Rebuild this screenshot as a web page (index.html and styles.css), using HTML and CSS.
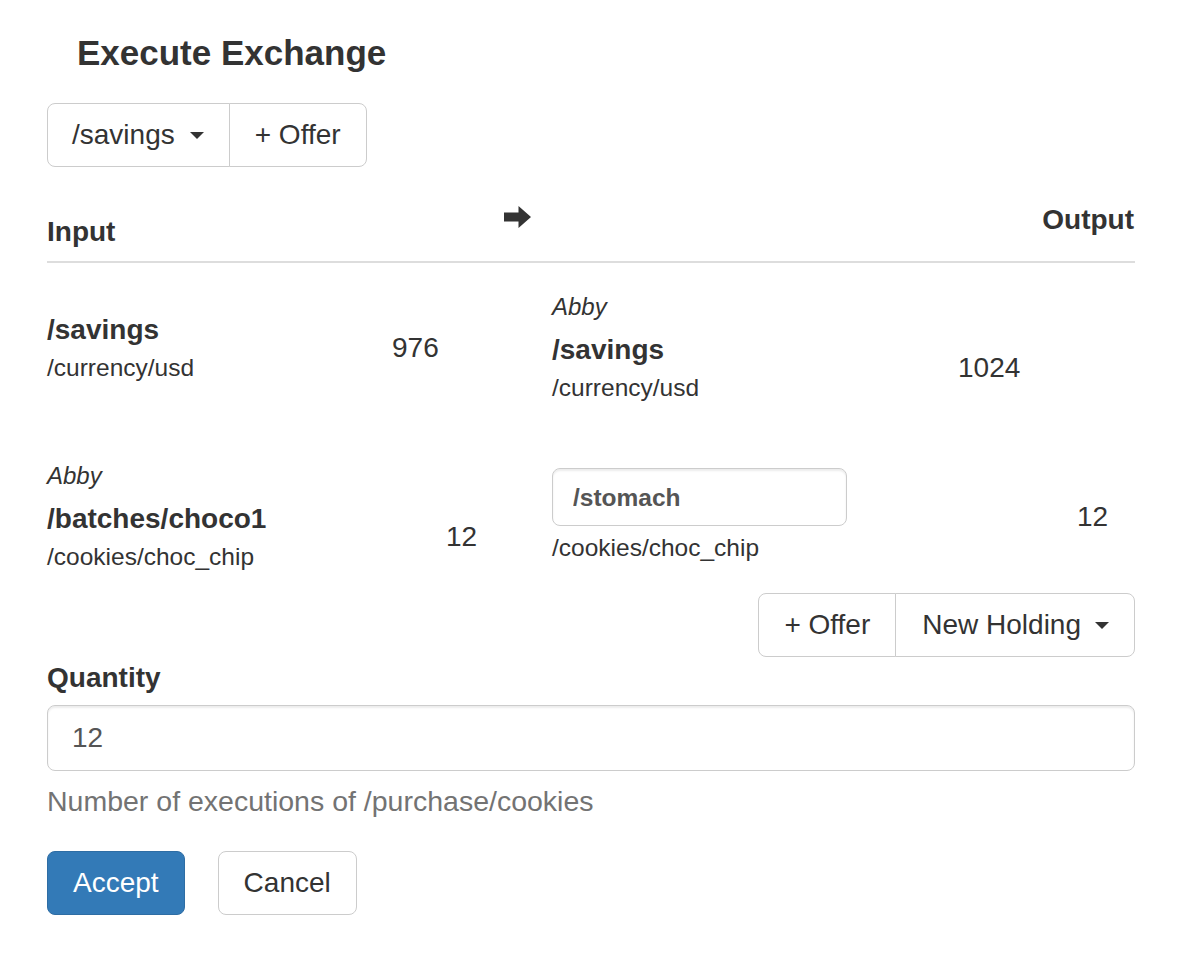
FILE: index.html
```html
<!DOCTYPE html>
<html lang="en">
<head>
<meta charset="utf-8">
<title>Execute Exchange</title>
<link rel="stylesheet" href="styles.css">
</head>
<body>
<div class="modal">
  <div class="modal-header">
    <h4 class="modal-title">Execute Exchange</h4>
  </div>

  <div class="toolbar">
    <div class="btn-group">
      <button class="btn btn-caret">/savings<span class="caret"></span></button>
      <button class="btn">+ Offer</button>
    </div>
  </div>

  <div class="io-head">
    <div class="io-in">Input</div>
    <svg class="io-arrow" viewBox="0 0 27 22" width="27" height="22" aria-hidden="true">
      <path d="M0 6.5h14.5V0L27 11 14.5 22v-6.5H0z" fill="#333"/>
    </svg>
    <div class="io-out">Output</div>
  </div>

  <div class="exchanges">
    <div class="xrow">
      <div class="side">
        <div class="hold in-1">
          <div class="acct">
            <div class="name">/savings</div>
            <div class="type">/currency/usd</div>
          </div>
          <div class="qty">976</div>
        </div>
      </div>
      <div class="side">
        <div class="owner">Abby</div>
        <div class="hold out-1">
          <div class="acct">
            <div class="name">/savings</div>
            <div class="type">/currency/usd</div>
          </div>
          <div class="qty">1024</div>
        </div>
      </div>
    </div>

    <div class="xrow">
      <div class="side">
        <div class="owner">Abby</div>
        <div class="hold in-2">
          <div class="acct">
            <div class="name">/batches/choco1</div>
            <div class="type">/cookies/choc_chip</div>
          </div>
          <div class="qty">12</div>
        </div>
      </div>
      <div class="side">
        <div class="hold out-2">
          <div class="acct">
            <input class="dest-input" type="text" value="/stomach">
            <div class="type">/cookies/choc_chip</div>
          </div>
          <div class="qty">12</div>
        </div>
      </div>
    </div>
  </div>

  <div class="actions">
    <div class="btn-group">
      <button class="btn">+ Offer</button>
      <button class="btn btn-caret">New Holding<span class="caret"></span></button>
    </div>
  </div>

  <div class="form-group">
    <label class="control-label" for="qty">Quantity</label>
    <input id="qty" class="form-control" type="text" value="12">
    <div class="help-block">Number of executions of /purchase/cookies</div>
  </div>

  <div class="footer">
    <button class="btn btn-primary">Accept</button>
    <button class="btn btn-default">Cancel</button>
  </div>
</div>
</body>
</html>
```

FILE: styles.css
```css
html, body {
  margin: 0;
  background: #fff;
}

body {
  font-family: "Liberation Sans", Arial, Helvetica, sans-serif;
  font-size: 28px;
  line-height: 40px;
  color: #333;
}

.modal {
  padding: 0 47px;
}

.modal-header {
  padding: 33px 30px 0;
}

.modal-title {
  margin: 0;
  font-size: 35px;
  line-height: 40px;
  font-weight: bold;
  color: #333;
}

.toolbar {
  display: flex;
  margin-top: 30px;
}

.btn-group {
  display: flex;
}

.btn {
  display: inline-flex;
  align-items: center;
  box-sizing: border-box;
  margin: 0;
  padding: 11px 25px;
  font-family: inherit;
  font-size: 28px;
  line-height: 40px;
  color: #333;
  background: #fff;
  border: 1px solid #ccc;
  border-radius: 8px;
  white-space: nowrap;
  cursor: pointer;
}

.btn-caret {
  padding-left: 24px;
  padding-right: 25px;
}

.btn-group .btn {
  border-radius: 0;
}

.btn-group .btn + .btn {
  margin-left: -1px;
}

.btn-group .btn:first-child {
  border-radius: 8px 0 0 8px;
}

.btn-group .btn:last-child {
  border-radius: 0 8px 8px 0;
}

.caret {
  display: inline-block;
  width: 0;
  height: 0;
  margin-left: 15px;
  border-top: 7px solid #333;
  border-left: 7px solid transparent;
  border-right: 7px solid transparent;
}

.actions .btn-caret {
  padding-left: 26px;
}

.actions .btn-caret .caret {
  margin-left: 14px;
}

.io-head {
  display: grid;
  grid-template-columns: 457px 27px 1fr;
  align-items: start;
  padding-bottom: 9px;
  border-bottom: 2px solid #ddd;
  font-weight: bold;
}

.io-in {
  margin-top: 45px;
}

.io-arrow {
  display: block;
  margin-top: 39px;
}

.io-out {
  margin-top: 33px;
  margin-right: 1px;
  text-align: right;
}

.exchanges {
  display: flex;
  flex-direction: column;
  gap: 53px;
  padding-top: 27px;
}

.xrow {
  display: grid;
  grid-template-columns: 458px 1fr;
  column-gap: 47px;
  align-items: center;
}

.owner {
  font-size: 24px;
  line-height: 34px;
  font-style: italic;
  margin-bottom: 6px;
}

.hold {
  display: grid;
  align-items: center;
}

.hold.in-1 { grid-template-columns: 345px auto; }
.hold.in-2 { grid-template-columns: 399px auto; }
.hold.out-1 { grid-template-columns: 406px auto; }
.hold.out-2 { grid-template-columns: 525px auto; }

.name {
  font-weight: bold;
  font-size: 28px;
  line-height: 40px;
}

.type {
  font-size: 24.5px;
  line-height: 36px;
}

.qty {
  font-size: 28px;
  line-height: 40px;
}

.dest-input {
  display: block;
  box-sizing: border-box;
  width: 295px;
  height: 58px;
  margin: 0 0 4px;
  padding: 12px 20px 10px;
  font-family: inherit;
  font-weight: bold;
  font-size: 24.5px;
  line-height: 34px;
  color: #555;
  background: #fff;
  border: 1px solid #ccc;
  border-radius: 8px;
  box-shadow: inset 0 2px 2px rgba(0, 0, 0, 0.075);
  outline: none;
}

.actions {
  display: flex;
  justify-content: flex-end;
  margin-top: 18px;
}

.form-group {
  margin-top: 1px;
}

.control-label {
  display: block;
  font-weight: bold;
  margin-bottom: 7px;
}

.form-control {
  display: block;
  box-sizing: border-box;
  width: 100%;
  height: 66px;
  margin: 0;
  padding: 12px 24px;
  font-family: inherit;
  font-size: 28px;
  line-height: 40px;
  color: #555;
  background: #fff;
  border: 1px solid #ccc;
  border-radius: 8px;
  box-shadow: inset 0 2px 2px rgba(0, 0, 0, 0.075);
  outline: none;
}

.help-block {
  margin-top: 10px;
  font-size: 28.5px;
  color: #737373;
}

.footer {
  display: flex;
  gap: 33px;
  margin-top: 30px;
}

.btn-primary {
  color: #fff;
  background: #337ab7;
  border-color: #2e6da4;
}

.btn-default {
  color: #333;
  background: #fff;
  border-color: #ccc;
}
```
